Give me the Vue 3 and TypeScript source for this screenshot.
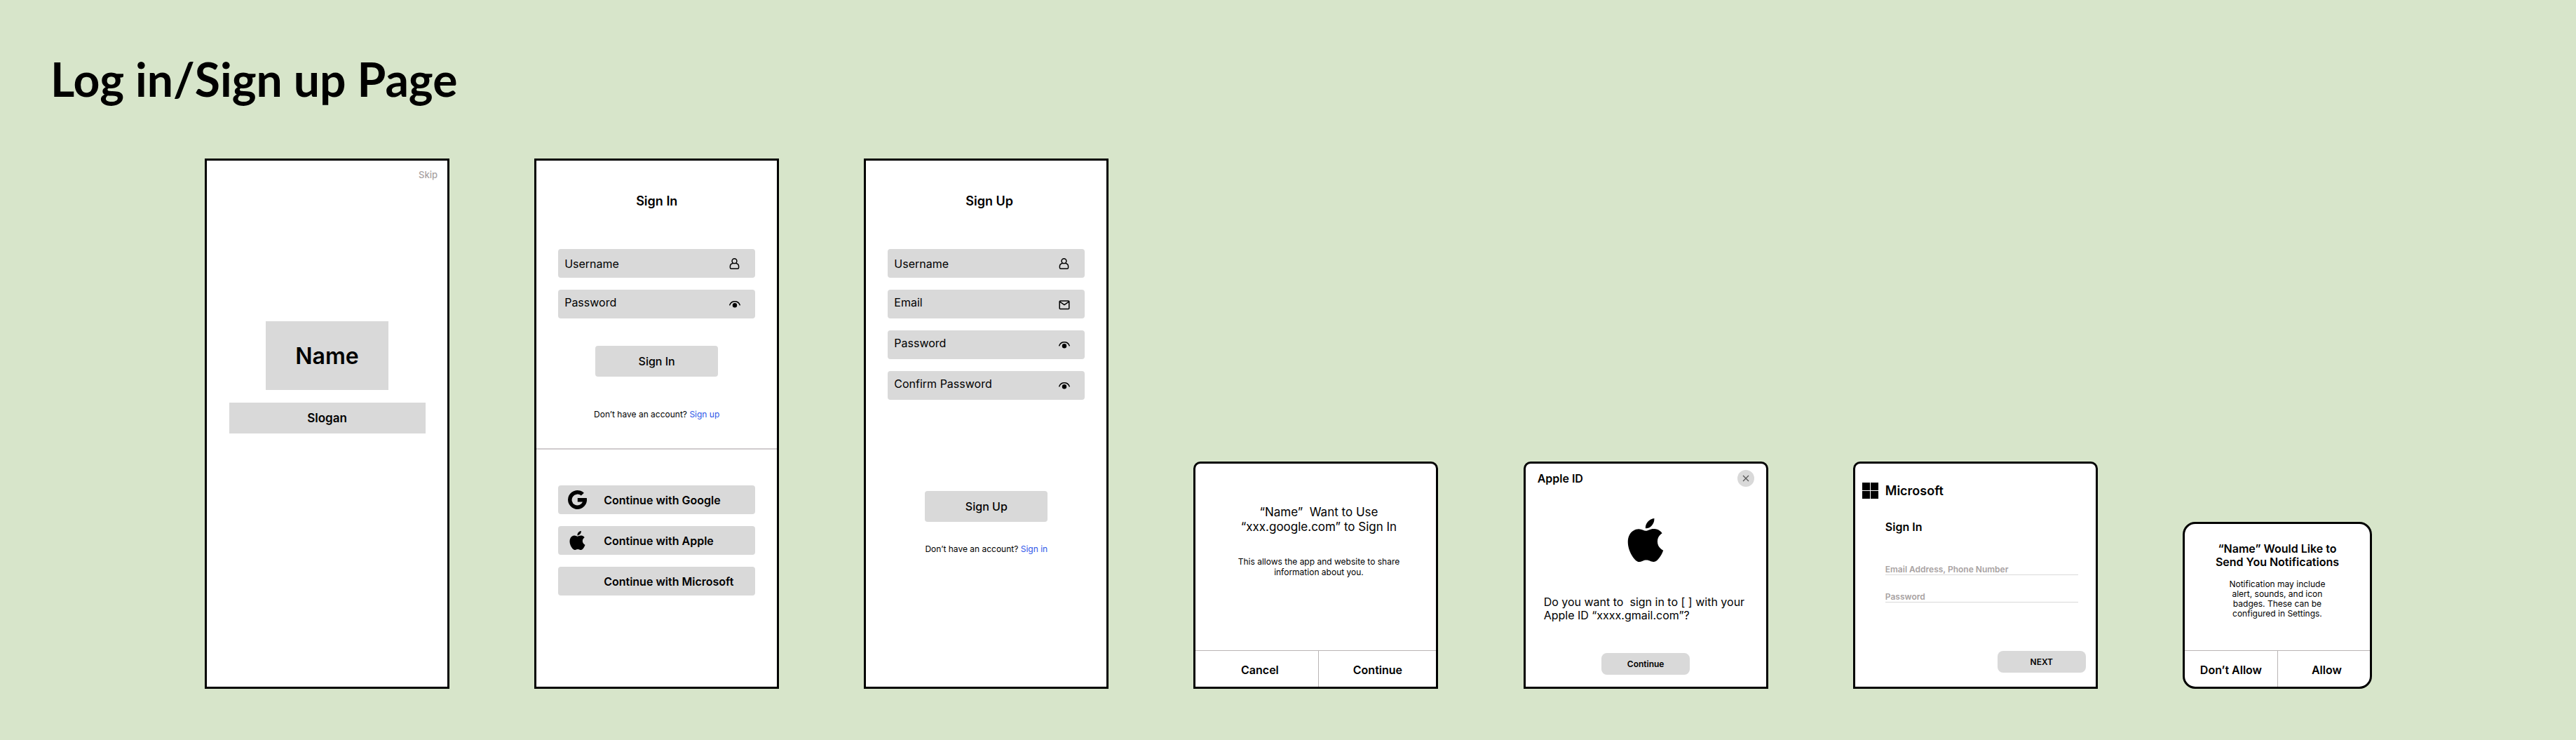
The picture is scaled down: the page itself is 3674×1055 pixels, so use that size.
<script setup lang="ts">
import { reactive } from 'vue'

type IconName = 'user' | 'mail' | 'eye'

interface Field {
  id: string
  label: string
  type: 'text' | 'email' | 'password'
  icon: IconName
}

const signInFields: Field[] = [
  { id: 'signin-username', label: 'Username', type: 'text', icon: 'user' },
  { id: 'signin-password', label: 'Password', type: 'password', icon: 'eye' },
]

const signUpFields: Field[] = [
  { id: 'signup-username', label: 'Username', type: 'text', icon: 'user' },
  { id: 'signup-email', label: 'Email', type: 'email', icon: 'mail' },
  { id: 'signup-password', label: 'Password', type: 'password', icon: 'eye' },
  { id: 'signup-confirm', label: 'Confirm Password', type: 'password', icon: 'eye' },
]

const forms = [
  { key: 'in', title: 'Sign In', fields: signInFields, action: 'Sign In', link: 'Sign up' },
  { key: 'up', title: 'Sign Up', fields: signUpFields, action: 'Sign Up', link: 'Sign in' },
]

const providers = ['Google', 'Apple', 'Microsoft']

const microsoftFields = [
  { id: 'ms-account', label: 'Email Address, Phone Number', type: 'text' },
  { id: 'ms-password', label: 'Password', type: 'password' },
]

const values = reactive<Record<string, string>>({})

const applePath =
  'M12.152 6.896c-.948 0-2.415-1.078-3.96-1.04-2.04.027-3.91 1.183-4.961 3.014-2.117 3.675-.546 9.103 1.519 12.09 1.013 1.454 2.208 3.09 3.792 3.039 1.52-.065 2.09-.987 3.935-.987 1.831 0 2.35.987 3.96.948 1.637-.026 2.676-1.48 3.676-2.948 1.156-1.688 1.636-3.325 1.662-3.415-.039-.013-3.182-1.221-3.22-4.857-.026-3.04 2.48-4.494 2.597-4.559-1.429-2.09-3.623-2.324-4.39-2.376-2-.156-3.675 1.09-4.61 1.09zM15.53 3.83c.843-1.012 1.4-2.427 1.245-3.83-1.207.052-2.662.805-3.532 1.818-.78.896-1.454 2.338-1.273 3.714 1.338.104 2.715-.688 3.559-1.701'
</script>

<template>
  <main class="board">
    <h1 class="board-title">Log in/Sign up Page</h1>

    <div class="screens">
      <section class="card phone welcome">
        <button class="skip" type="button">Skip</button>
        <h2 class="brand">Name</h2>
        <p class="slogan">Slogan</p>
      </section>

      <section v-for="form in forms" :key="form.key" class="card phone">
        <form class="auth" :class="form.key" @submit.prevent>
          <h2 class="auth-title">{{ form.title }}</h2>
          <div class="fields">
            <label v-for="f in form.fields" :key="f.id" class="field" :for="f.id">
              <input
                :id="f.id"
                v-model="values[f.id]"
                :type="f.type"
                :placeholder="f.label"
                :aria-label="f.label"
              />
              <svg v-if="f.icon === 'user'" class="field-icon" viewBox="0 0 16 16" aria-hidden="true">
                <circle cx="7.5" cy="4.2" r="3.4" />
                <path d="M4.9 7.4C2.7 7.9 1.4 9.5 1.4 11.7v1.9c0 .9.5 1.5 1.4 1.5h9.4c.9 0 1.4-.6 1.4-1.5v-1.9c0-2.2-1.3-3.8-3.5-4.3" />
              </svg>
              <svg v-else-if="f.icon === 'mail'" class="field-icon" viewBox="0 0 16 16" aria-hidden="true">
                <rect x="1.2" y="3" width="13.6" height="11.4" rx="1" />
                <path d="M1.5 4.2 8 8.7l6.5-4.5" />
              </svg>
              <svg v-else class="field-icon" viewBox="0 0 16 16" aria-hidden="true">
                <path d="M.8 8.8C2 5.7 4.6 3.8 8 3.8s6 1.9 7.2 5" />
                <circle class="solid" cx="8" cy="9.2" r="3.2" />
              </svg>
            </label>
          </div>
          <button class="submit" type="submit">{{ form.action }}</button>
          <p class="switch">Don’t have an account? <a href="#">{{ form.link }}</a></p>
        </form>

        <div v-if="form.key === 'in'" class="providers">
          <button v-for="p in providers" :key="p" class="provider" type="button">
            <span class="provider-logo">
              <svg v-if="p === 'Google'" width="27" height="27" viewBox="0 0 27 27" aria-hidden="true">
                <path d="M22.9 3.8A13.5 13.5 0 1 0 26.8 11.1H13.8v5.5H21A8 8 0 1 1 18.9 7.6Z" />
              </svg>
              <svg v-else-if="p === 'Apple'" width="23" height="27" viewBox="2 0 20 24" aria-hidden="true">
                <path :d="applePath" />
              </svg>
            </span>
            Continue with {{ p }}
          </button>
        </div>
      </section>

      <section class="card sheet google">
        <h2 class="google-title">“Name”&nbsp; Want to Use<br />“xxx.google.com” to Sign In</h2>
        <p class="google-text">This allows the app and website to share<br />information about you.</p>
        <div class="actions">
          <button type="button">Cancel</button>
          <button type="button">Continue</button>
        </div>
      </section>

      <section class="card sheet apple">
        <header class="apple-head">
          <h2>Apple ID</h2>
          <button class="close" type="button" aria-label="Close">
            <svg width="10" height="10" viewBox="0 0 10 10" aria-hidden="true">
              <path d="M1 1l8 8M9 1L1 9" />
            </svg>
          </button>
        </header>
        <svg class="apple-logo" width="52" height="62" viewBox="2 0 20 24" aria-hidden="true">
          <path :d="applePath" />
        </svg>
        <p class="apple-text">Do you want to&nbsp; sign in to [ ] with your<br />Apple ID “xxxx.gmail.com”?</p>
        <button class="pill" type="button">Continue</button>
      </section>

      <form class="card sheet microsoft" @submit.prevent>
        <header class="ms-head">
          <svg width="23" height="23" viewBox="0 0 23 23" aria-hidden="true">
            <path d="M0 0h11v11H0zM12 0h11v11H12zM0 12h11v11H0zM12 12h11v11H12z" />
          </svg>
          <h2>Microsoft</h2>
        </header>
        <div class="ms-body">
          <h3>Sign In</h3>
          <input
            v-for="f in microsoftFields"
            :id="f.id"
            :key="f.id"
            v-model="values[f.id]"
            :type="f.type"
            :placeholder="f.label"
            :aria-label="f.label"
          />
        </div>
        <button class="pill" type="submit">NEXT</button>
      </form>

      <section class="card alert">
        <h2 class="alert-title">“Name” Would Like to<br />Send You Notifications</h2>
        <p class="alert-text">
          Notification may include<br />alert, sounds, and icon<br />badges. These can be<br />configured in Settings.
        </p>
        <div class="actions">
          <button type="button">Don’t Allow</button>
          <button type="button">Allow</button>
        </div>
      </section>
    </div>
  </main>
</template>

<style>
body {
  margin: 0;
  background: #d7e5ca;
}
</style>

<style scoped>
.board {
  box-sizing: border-box;
  min-height: 100vh;
  padding: 73px 72px;
  background: #d7e5ca;
  color: #000;
  font-family: Inter, 'Liberation Sans', sans-serif;
  font-size: 16px;
}

.board *,
.board *::before {
  box-sizing: border-box;
}

h1,
h2,
h3,
p {
  margin: 0;
}

button,
input {
  margin: 0;
  padding: 0;
  border: 0;
  background: none;
  color: inherit;
  font: inherit;
}

button {
  cursor: pointer;
}

.board-title {
  font-family: 'Gill Sans', 'Gill Sans MT', Lato, sans-serif;
  font-size: 66px;
  font-weight: 700;
  line-height: 80px;
}

.screens {
  display: flex;
  flex-wrap: wrap;
  align-items: flex-end;
  justify-content: space-between;
  gap: 48px;
  margin-top: 73px;
  padding: 0 219px 0 220px;
}

.card {
  display: flex;
  flex-direction: column;
  width: 349px;
  overflow: hidden;
  border: 3px solid #000;
  background: #fff;
}

.phone {
  min-height: 756px;
}

.sheet {
  min-height: 324px;
  border-radius: 10px 10px 0 0;
}

/* Welcome */
.welcome {
  align-items: center;
}

.skip {
  align-self: flex-end;
  margin: 12px 14px 0 0;
  color: #a8a2a2;
  font-size: 13px;
  font-weight: 500;
  line-height: 16px;
}

.brand,
.slogan {
  display: flex;
  align-items: center;
  justify-content: center;
  background: #d9d9d9;
  font-weight: 600;
}

.brand {
  width: 175px;
  height: 98px;
  margin-top: 201px;
  font-size: 32px;
}

.slogan {
  width: 280px;
  height: 44px;
  margin-top: 18px;
  font-size: 17px;
}

/* Sign in and sign up */
.auth {
  display: flex;
  flex-direction: column;
  padding: 47px 31px 0;
}

.auth-title {
  padding-left: 111px;
  font-size: 18px;
  font-weight: 600;
  line-height: 22px;
}

.fields {
  display: flex;
  flex-direction: column;
  gap: 17px;
  margin-top: 57px;
}

.field {
  display: flex;
  align-items: center;
  height: 41px;
  padding: 0 21px 0 9px;
  border-radius: 4px;
  background: #d9d9d9;
}

.field input {
  flex: 1;
  min-width: 0;
  height: 100%;
  outline: none;
}

.field input[type='password'],
.field input[type='email'] {
  padding-bottom: 6px;
}

.field input::placeholder {
  color: #000;
  opacity: 1;
}

.field-icon {
  width: 16px;
  height: 16px;
  fill: none;
  stroke: #000;
  stroke-width: 1.5;
  stroke-linecap: round;
  stroke-linejoin: round;
}

.field-icon .solid {
  fill: #000;
  stroke: none;
}

.submit {
  align-self: center;
  width: 175px;
  height: 44px;
  margin-top: 39px;
  border-radius: 4px;
  background: #d9d9d9;
  font-weight: 500;
}

.up .submit {
  margin-top: 130px;
}

.switch {
  margin-top: 46px;
  font-size: 12px;
  line-height: 16px;
  text-align: center;
}

.up .switch {
  margin-top: 31px;
}

.switch a {
  color: #2d55e8;
  text-decoration: none;
}

.providers {
  display: flex;
  flex-direction: column;
  gap: 17px;
  margin-top: 40px;
  padding: 51px 31px 0;
  border-top: 2px solid #d0cbcd;
}

.provider {
  display: flex;
  align-items: center;
  height: 41px;
  padding-left: 14px;
  border-radius: 4px;
  background: #d9d9d9;
  font-weight: 600;
}

.provider-logo {
  display: flex;
  flex: none;
  justify-content: center;
  width: 27px;
  margin-right: 24px;
}

/* Dialog footers */
.actions {
  display: flex;
  height: 52px;
  margin-top: auto;
  border-top: 1px solid #b9b4b4;
}

.actions button {
  flex: 1 1 50%;
  padding-top: 3px;
  font-weight: 600;
}

.actions button + button {
  border-left: 1px solid #b9b4b4;
}

/* Google */
.google-title,
.google-text {
  padding-left: 8px;
  text-align: center;
}

.google-title {
  margin-top: 59px;
  font-size: 17px;
  font-weight: 400;
  line-height: 21px;
}

.google-text {
  margin-top: 31px;
  font-size: 12px;
  line-height: 15px;
}

.google .actions button:first-child {
  flex: 0 0 51%;
  padding-left: 8px;
}

/* Apple */
.apple-head {
  display: flex;
  align-items: center;
  justify-content: space-between;
  padding: 9px 17px 0;
}

.apple-head h2 {
  font-size: 16px;
  font-weight: 600;
}

.close {
  display: flex;
  align-items: center;
  justify-content: center;
  width: 24px;
  height: 24px;
  border-radius: 50%;
  background: #d9d9d9;
}

.close svg {
  fill: none;
  stroke: #555;
  stroke-width: 1.2;
}

.apple-logo {
  align-self: center;
  margin-top: 45px;
}

.apple-text {
  margin: 48px 0 0 26px;
  line-height: 19px;
}

.pill {
  width: 126px;
  height: 31px;
  border-radius: 8px;
  background: #d9d9d9;
  font-size: 12px;
  font-weight: 600;
}

.apple .pill {
  align-self: center;
  margin-top: 44px;
}

/* Microsoft */
.ms-head {
  display: flex;
  align-items: center;
  gap: 10px;
  padding: 27px 10px 0;
}

.ms-head h2 {
  font-size: 18px;
  font-weight: 600;
  line-height: 22px;
}

.ms-body {
  display: flex;
  flex-direction: column;
  gap: 23px;
  padding: 30px 25px 0 43px;
}

.ms-body h3 {
  margin-bottom: 20px;
  font-size: 16px;
  font-weight: 600;
  line-height: 20px;
}

.ms-body input {
  height: 16px;
  border-bottom: 1px solid #d9d9d9;
  outline: none;
  font-size: 12px;
  font-weight: 600;
}

.ms-body input::placeholder {
  color: #a8a2a2;
  opacity: 1;
}

.microsoft .pill {
  align-self: flex-end;
  margin: 69px 14px 0 0;
}

/* Notification alert */
.alert {
  width: 270px;
  min-height: 238px;
  border-radius: 18px;
}

.alert-title,
.alert-text {
  text-align: center;
}

.alert-title {
  margin-top: 26px;
  font-size: 16px;
  font-weight: 600;
  line-height: 19px;
}

.alert-text {
  margin-top: 15px;
  font-size: 12px;
  line-height: 14px;
}

.alert .actions button:last-child {
  padding-left: 8px;
}
</style>
